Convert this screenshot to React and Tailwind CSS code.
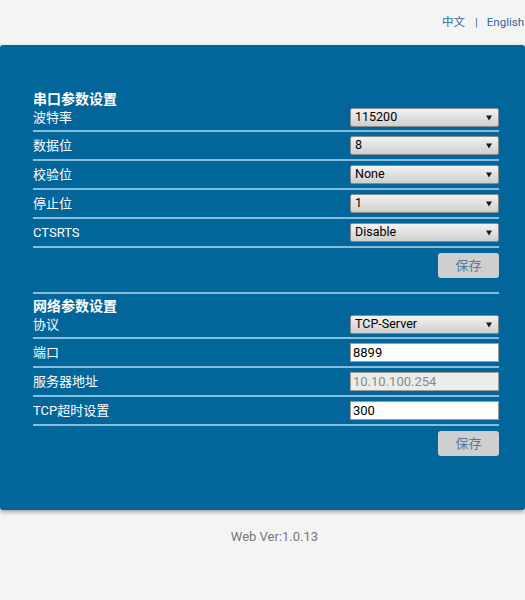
const font = { fontFamily: 'Roboto, "Noto Sans CJK SC", sans-serif' };

const serial = [
  { label: '波特率', value: '115200' },
  { label: '数据位', value: '8' },
  { label: '校验位', value: 'None' },
  { label: '停止位', value: '1' },
  { label: 'CTSRTS', value: 'Disable' },
];

function Select({ value }) {
  return (
    <div className="w-[149px] h-[19px] flex items-center justify-between pl-[4px] pr-[6px] border border-[#8a8a8a] rounded-[2px] bg-gradient-to-b from-[#f2f2f2] to-[#cfcfcf] text-[12.5px] text-black leading-none">
      <span>{value}</span>
      <svg width="6" height="6" viewBox="0 0 6 6">
        <path d="M0 0.5h6L3 5.5z" fill="#1a1a1a" />
      </svg>
    </div>
  );
}

function Input({ value, disabled }) {
  return (
    <div
      className={`w-[149px] h-[19px] flex items-center pl-[2px] border border-[#9a9a9a] text-[13px] leading-none ${
        disabled ? 'bg-[#ecece8] text-[#8a8a8a]' : 'bg-white text-black'
      }`}
    >
      {value}
    </div>
  );
}

function Row({ label, children, first }) {
  return (
    <div className={`flex items-center justify-between border-b-2 border-[#86bddc] ${first ? 'pt-[1px] pb-[3px]' : 'pt-[4px] pb-[4px]'}`}>
      <span className="text-[13px] text-white leading-none">{label}</span>
      {children}
    </div>
  );
}

function SaveButton() {
  return (
    <div className="flex justify-end">
      <button className="w-[61px] h-[25px] rounded-[3px] bg-[#cfcfcf] text-[#4f7bab] text-[13px]">保存</button>
    </div>
  );
}

export default function App() {
  return (
    <div className="min-h-[600px] bg-[#f4f4f4]" style={font}>
      <div className="h-[45px] flex justify-end items-start pt-[14px] pr-[1px] text-[11.5px] text-[#2d6a9c]">
        <span>中文</span>
        <span className="ml-[10px] mr-[9px]">|</span>
        <span>English</span>
      </div>

      <div className="bg-[#02669a] rounded-[3px] shadow-[0_2px_4px_rgba(0,0,0,0.35)] pl-[33px] pr-[26px] pt-[46px] pb-[54px]">
        <div className="text-[14px] font-bold text-white leading-[16px]">串口参数设置</div>
        {serial.map((s, i) => (
          <Row key={s.label} label={s.label} first={i === 0}>
            <Select value={s.value} />
          </Row>
        ))}
        <div className="pt-[5px] pb-[14px]">
          <SaveButton />
        </div>

        <div className="border-t-2 border-[#86bddc] pt-[4px]">
          <div className="text-[14px] font-bold text-white leading-[16px]">网络参数设置</div>
          <Row label="协议" first>
            <Select value="TCP-Server" />
          </Row>
          <Row label="端口">
            <Input value="8899" />
          </Row>
          <Row label="服务器地址">
            <Input value="10.10.100.254" disabled />
          </Row>
          <Row label="TCP超时设置">
            <Input value="300" />
          </Row>
          <div className="pt-[5px]">
            <SaveButton />
          </div>
        </div>
      </div>

      <div className="pt-[17px] pl-[24px] text-center text-[13px] text-[#777]">Web Ver:1.0.13</div>
    </div>
  );
}
